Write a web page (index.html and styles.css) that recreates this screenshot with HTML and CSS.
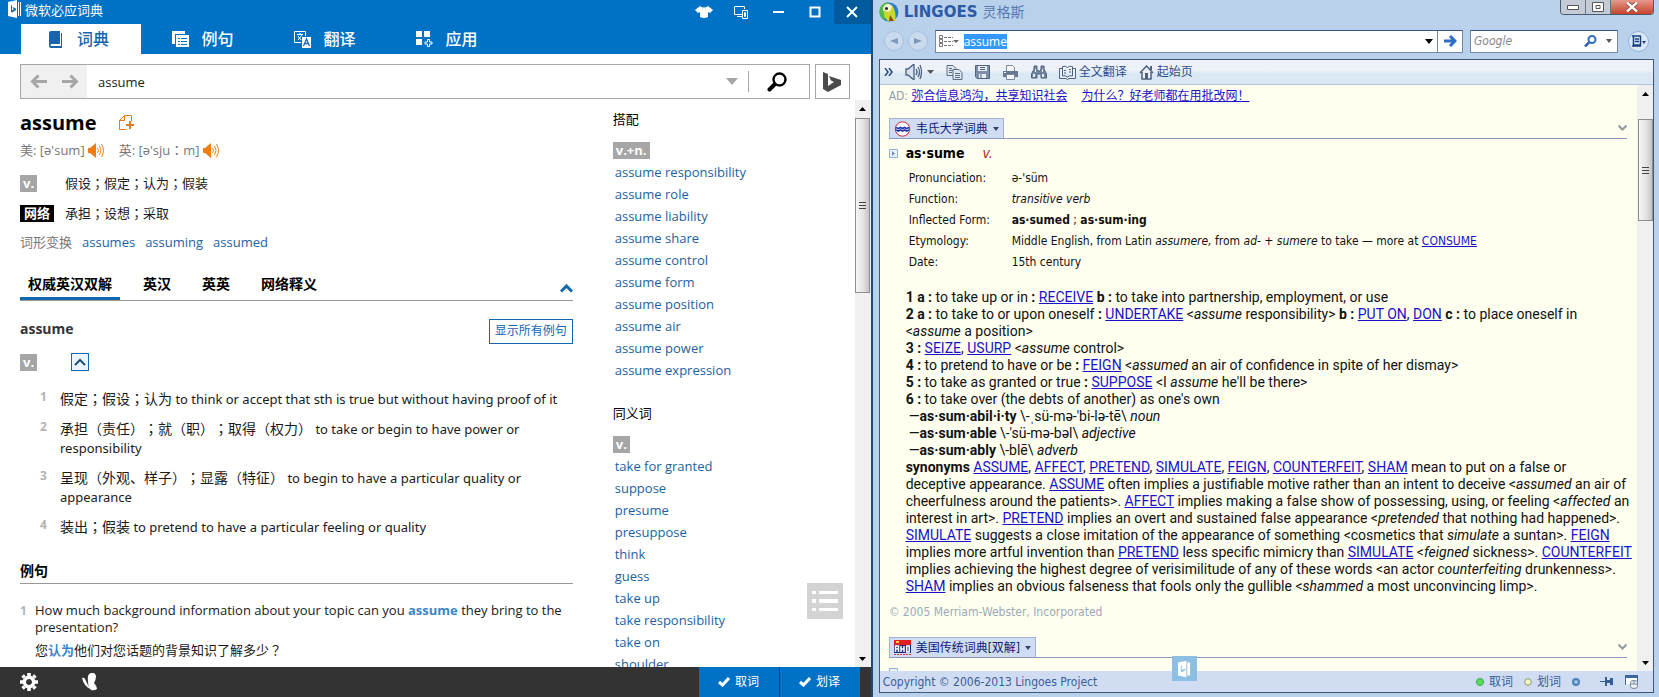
FILE: index.html
```html
<!DOCTYPE html>
<html lang="zh-CN">
<head>
<meta charset="utf-8">
<title>微软必应词典 / Lingoes</title>
<link rel="stylesheet" href="styles.css">
</head>
<body>
<section class="bing">
  <header class="bing-head">
    <div class="bing-title">
      <svg width="14" height="18" viewBox="0 0 14 18"><path fill="#fff" d="M0 2l9-2v18l-9-2zM10 2h1v14h-1zM12 2h1v14h-1z"/><path fill="#0072c6" d="M3 5l1 .4v4.800l2-1-1-.6-.6-1.500L8 8.600v1.600l-4 2.300-1-.6z"/></svg>
      <h1>微软必应词典</h1>
      <div class="bing-ctl">
        <button aria-label="皮肤"><svg width="18" height="12" viewBox="0 0 18 12"><path fill="#fff" d="M5 0Q9 3 13 0l5 4-3 3-2-1v5q-4 2-8 0V6L3 7 0 4z"/></svg></button>
        <button aria-label="迷你"><svg width="15" height="13" viewBox="0 0 15 13" fill="none" stroke="#fff"><path d="M8 8.500H.5v-8h10V3"/><path d="M3 10.500h5"/><path d="M8.500 4.500h5v8h-5z"/><path d="M10.500 6.500h1v4h-1z"/></svg></button>
        <button aria-label="最小化"><svg width="12" height="12"><path fill="#fff" d="M1 5h11v2H1z"/></svg></button>
        <button aria-label="最大化"><svg width="12" height="12"><path fill="none" stroke="#fff" stroke-width="2" d="M1.500 1.500h9v9h-9z"/></svg></button>
        <button class="x" aria-label="关闭"><svg width="12" height="12"><path stroke="#fff" stroke-width="2" d="M1 1l10 10M11 1L1 11"/></svg></button>
      </div>
    </div>
    <nav class="tabs">
      <button class="tab on"><svg width="14" height="17" viewBox="0 0 14 17"><path fill="#1565b0" d="M2 0h9v13H2.500q-1 0-1 1t1 1H12V2h1v15H2Q0 17 0 15V2Q0 0 2 0z"/></svg>词典</button>
      <button class="tab"><svg width="17" height="17" viewBox="0 0 17 17"><path fill="#fff" d="M0 0h13v3H3v10H0z"/><path fill="#fff" d="M4 4h13v12H4z"/><path stroke="#0072c6" d="M6 7.500h2M9 7.500h6M6 10.500h2M9 10.500h6M6 13.500h2M9 13.500h6"/></svg>例句</button>
      <button class="tab"><svg width="17" height="17" viewBox="0 0 17 17"><path fill="none" stroke="#fff" d="M7 11.500H.5V.5h11V5M3 3.500h6M6 2v2M4 9l4-5M4 5l3 4"/><path fill="#fff" d="M8 6h9v11H8z"/><path fill="none" stroke="#0072c6" stroke-width="1.300" d="M9.500 15l3-7 3 7M10.500 12.500h4"/></svg>翻译</button>
      <button class="tab"><svg width="17" height="17" viewBox="0 0 17 17"><path fill="#fff" d="M0 0h6v6H0zM8 0h6v6H8zM0 8h6v6H0z"/><path fill="none" stroke="#fff" d="M11.500 8.500h2v2.500h2.500v2h-2.500v2.500h-2V13H9v-2h2.500z"/></svg>应用</button>
    </nav>
  </header>

  <form class="search" onsubmit="return false">
    <div class="search-box">
      <div class="nav">
        <button type="button" aria-label="后退"><svg width="17" height="15"><path fill="none" stroke="#a6a6a6" stroke-width="3" d="M8.500 1.500l-6 6 6 6M2 7.500h15"/></svg></button>
        <button type="button" aria-label="前进"><svg width="17" height="15"><path fill="none" stroke="#a6a6a6" stroke-width="3" d="M8.500 1.500l6 6-6 6M15 7.500H0"/></svg></button>
      </div>
      <input class="q" aria-label="查词" value="assume">
      <button type="button" class="drop" aria-label="历史"><svg width="12" height="7"><path fill="#a6a6a6" d="M0 0h12L6 7z"/></svg></button>
      <button class="go" aria-label="搜索"><svg width="20" height="20" viewBox="0 0 20 20" fill="none" stroke="#000"><circle cx="12.500" cy="7.500" r="6" stroke-width="2.400"/><path stroke-width="4" stroke-linecap="round" d="M7.500 12.500L2.500 17.500"/></svg></button>
    </div>
    <button type="button" class="b" aria-label="Bing"><svg width="18" height="20" viewBox="0 0 18 20"><path fill="#4b4b4b" d="M0 0l5 2v12l6-4-3-1.500-2-4.500 12 4v5L5 20l-5-3z"/></svg></button>
  </form>

  <div class="bing-body">
    <div class="bing-scroll">
      <main class="entry">
        <div class="word"><h2>assume</h2>
          <svg width="15" height="16" viewBox="0 0 15 16"><path fill="none" stroke="#e07b1c" d="M7 14.500H.5v-9l5-5h7V6M5.500.5v5h-5"/><path stroke="#e07b1c" stroke-width="2" d="M11 6v8M7 10h8"/></svg></div>
        <div class="pron">美: [ə'sum] <svg width="17" height="15" viewBox="0 0 17 15"><path fill="#f07d14" d="M0 5h2l6-5v15l-6-5H0z"/><path fill="none" stroke="#f07d14" d="M9.500 5q2 2.500 0 5M11.500 3q3 4.500 0 9M13.500 1q4 6.500 0 13"/></svg><span>英: [ə'sju<span class="mid" lang="zh-TW">：</span>m]</span> <svg width="17" height="15" viewBox="0 0 17 15"><path fill="#f07d14" d="M0 5h2l6-5v15l-6-5H0z"/><path fill="none" stroke="#f07d14" d="M9.500 5q2 2.500 0 5M11.500 3q3 4.500 0 9M13.500 1q4 6.500 0 13"/></svg></div>
        <div class="sense"><span class="cell"><b class="tag">v.</b></span>假设<span class="mid" lang="zh-TW">；</span>假定<span class="mid" lang="zh-TW">；</span>认为<span class="mid" lang="zh-TW">；</span>假装</div>
        <div class="sense"><span class="cell"><b class="tag black">网络</b></span>承担<span class="mid" lang="zh-TW">；</span>设想<span class="mid" lang="zh-TW">；</span>采取</div>
        <div class="forms">词形变换 <a href="#">assumes</a><a href="#">assuming</a><a href="#">assumed</a></div>
        <div class="subtabs">
          <button class="on">权威英汉双解</button><button>英汉</button><button>英英</button><button>网络释义</button>
          <svg width="13" height="9"><path fill="none" stroke="#1068ad" stroke-width="3" d="M1 7.500L6.500 2 12 7.500"/></svg>
        </div>
        <div class="sub"><h3>assume</h3><button class="showall">显示所有例句</button></div>
        <div class="pos"><b class="tag">v.</b><button aria-label="收起"><svg width="12" height="8"><path fill="none" stroke="#1d4f80" stroke-width="2" d="M1 7l5-5 5 5"/></svg></button></div>
        <ol class="defs">
          <li><i>1</i><p><span class="cn">假定<span class="mid" lang="zh-TW">；</span>假设<span class="mid" lang="zh-TW">；</span>认为</span> to think or accept that sth is true but without having proof of it</p></li>
          <li><i>2</i><p><span class="cn">承担<span class="mid" lang="zh-TW">（</span>责任<span class="mid" lang="zh-TW">）；</span>就<span class="mid" lang="zh-TW">（</span>职<span class="mid" lang="zh-TW">）；</span>取得<span class="mid" lang="zh-TW">（</span>权力<span class="mid" lang="zh-TW">）</span></span> to take or begin to have power or<br>responsibility</p></li>
          <li><i>3</i><p><span class="cn">呈现<span class="mid" lang="zh-TW">（</span>外观、样子<span class="mid" lang="zh-TW">）；</span>显露<span class="mid" lang="zh-TW">（</span>特征<span class="mid" lang="zh-TW">）</span></span> to begin to have a particular quality or<br>appearance</p></li>
          <li><i>4</i><p><span class="cn">装出<span class="mid" lang="zh-TW">；</span>假装</span> to pretend to have a particular feeling or quality</p></li>
        </ol>
        <h4>例句</h4>
        <div class="ex"><i>1</i><div><p>How much background information about your topic can you <b>assume</b> they bring to the<br>presentation?</p><p class="zh">您<b>认为</b>他们对您话题的背景知识了解多少<span class="mid" lang="zh-TW">？</span></p></div></div>
      </main>
      <aside class="side">
        <h5>搭配</h5>
        <b class="tag">v.+n.</b>
        <ul><li><a href="#">assume responsibility</a></li><li><a href="#">assume role</a></li><li><a href="#">assume liability</a></li><li><a href="#">assume share</a></li><li><a href="#">assume control</a></li><li><a href="#">assume form</a></li><li><a href="#">assume position</a></li><li><a href="#">assume air</a></li><li><a href="#">assume power</a></li><li><a href="#">assume expression</a></li></ul>
        <h5>同义词</h5>
        <b class="tag">v.</b>
        <ul><li><a href="#">take for granted</a></li><li><a href="#">suppose</a></li><li><a href="#">presume</a></li><li><a href="#">presuppose</a></li><li><a href="#">think</a></li><li><a href="#">guess</a></li><li><a href="#">take up</a></li><li><a href="#">take responsibility</a></li><li><a href="#">take on</a></li><li><a href="#">shoulder</a></li></ul>
      </aside>
      <button class="toc" aria-label="目录"><svg width="26" height="22" viewBox="0 0 26 22"><path fill="#fff" d="M0 1h4v3H0zM0 9h4v4H0zM0 18h4v3H0zM7 1h19v3H7zM7 9h19v4H7zM7 18h19v3H7z"/></svg></button>
    </div>
    <div class="bar"><svg width="7" height="4"><path d="M0 4l3.500-4L7 4z"/></svg><div class="thumb big"><s></s><s></s><s></s></div><svg class="end" width="7" height="4"><path d="M0 0l3.500 4L7 0z"/></svg></div>
  </div>

  <footer class="bing-foot">
    <button class="ic" aria-label="设置"><svg width="18" height="18" viewBox="-9 -9 18 18"><circle r="4.700" fill="none" stroke="#fff" stroke-width="3.400"/><path stroke="#fff" stroke-width="3.600" d="M0-9v3M0 9V6M-9 0h3M9 0H6M-6.400-6.400l2 2M6.400 6.400l-2-2M-6.400 6.400l2-2M6.400-6.400l-2 2"/></svg></button>
    <button class="ic" aria-label="必应"><svg width="16" height="18" viewBox="0 0 16 18"><path fill="#fff" d="M6 8Q5 1 9 0q4-1 5 3 0 4-2 7 3 3 3 6-3 2-6 1-3-3-3-9zM0 5q2-1 3 1l5 10Q2 13 0 5z"/></svg></button>
    <span class="grow"></span>
    <button class="act"><svg width="12" height="10"><path fill="none" stroke="#fff" stroke-width="3" d="M1 5l3.500 3L11 1"/></svg>取词</button>
    <button class="act"><svg width="12" height="10"><path fill="none" stroke="#fff" stroke-width="3" d="M1 5l3.500 3L11 1"/></svg>划译</button>
  </footer>
</section>

<section class="ling">
  <header class="ling-title">
    <svg width="20" height="20" viewBox="0 0 20 20"><circle cx="10" cy="10" r="9.500" fill="#2a7fc4"/><path fill="#57b947" d="M1 6q2-5 8-6l3 7-7 11Q-1 13 1 6z"/><circle cx="9" cy="7" r="5" fill="#f4f7d8"/><path fill="#c6d92c" d="M5 8q7 5 8-5 5 8 3 16H9q-5-4-4-11z"/><circle cx="7.500" cy="6.500" r="1.500" fill="#222"/><path fill="#8a4a22" d="M11 13l4 6h-5z"/></svg>
    <strong>LINGOES</strong><span>灵格斯</span>
    <div class="winctl"><button aria-label="最小化"><svg width="12" height="5"><path fill="#fff" stroke="#555" d="M.5.5h11v4H.5z"/></svg></button><button aria-label="最大化"><svg width="12" height="10"><path fill="#fff" stroke="#555" d="M.5.5h11v9H.5zM4 3.500h4v3H4z"/></svg></button><button class="close" aria-label="关闭"><svg width="12" height="10"><path stroke="#7a3a33" stroke-width="4" d="M1 .5l10 9M11 .5l-10 9"/><path stroke="#fff" stroke-width="2.500" d="M1 .5l10 9M11 .5l-10 9"/></svg></button></div>
  </header>
  <form class="ling-search" onsubmit="return false">
    <button type="button" class="round" aria-label="后退"><svg width="8" height="6"><path fill="#7f96b8" d="M8 0v6L0 3z"/></svg></button>
    <button type="button" class="round" aria-label="前进"><svg width="8" height="6"><path fill="#7f96b8" d="M0 0v6l8-3z"/></svg></button>
    <div class="field main">
      <svg width="20" height="12" viewBox="0 0 20 12"><path fill="none" stroke="#777" d="M.5.5h3v3h-3zM.5 4.500h3v3h-3zM.5 8.500h3v3h-3z"/><path stroke="#777" stroke-dasharray="3 1" d="M5 2.500h9M5 6.500h9M5 10.500h9"/><path fill="#666" d="M14 5h6l-3 3z"/></svg>
      <div class="sel"><input aria-label="单词" value="assume" size="6"></div>
      <button type="button" class="pull" aria-label="历史"><svg width="8" height="5"><path d="M0 0h8L4 5z"/></svg></button>
      <button class="arrow" aria-label="查找"><svg width="13" height="12"><path fill="none" stroke="#2b70c4" stroke-width="3" d="M0 6h10M6 1l5 5-5 5"/></svg></button>
    </div>
    <div class="field goog"><input aria-label="Google" placeholder="Google"><svg width="13" height="12"><circle cx="8" cy="4.500" r="3.500" fill="none" stroke="#2f6fc0" stroke-width="2"/><path stroke="#2f5fb0" stroke-width="2.500" d="M5 7.500L1 11.500"/></svg><svg width="6" height="4"><path fill="#555" d="M0 0h6L3 4z"/></svg></div>
    <button type="button" class="menu" aria-label="菜单"><svg width="14" height="12"><path fill="none" stroke="#1d3f7a" stroke-width="1.500" d="M0 1h9M1.500 1v9h7V1M3 4h4M3 6.500h4M0 11h9"/><path fill="#1d3f7a" d="M10 6h4l-2 3z"/></svg></button>
  </form>
  <div class="frame">
    <div class="tools">
      <button aria-label="更多"><svg width="9" height="8"><path fill="none" stroke="#234a7c" stroke-width="1.500" d="M1 0l3 4-3 4M5 0l3 4-3 4"/></svg></button>
      <button aria-label="朗读"><svg width="29" height="16" viewBox="0 0 29 16" fill="none" stroke="#4b6282" stroke-width="1.300"><path fill="#d8e2ee" d="M1 5h2l6-5v16l-6-5H1z"/><path d="M11 5q2 3 0 6M13 3q3 5 0 10M15 1q3 7 0 14"/><path fill="#53565c" stroke="none" d="M22 6h7l-3.500 4z"/></svg></button>
      <button aria-label="复制"><svg width="17" height="15" viewBox="0 0 17 15" fill="#dde6f0" stroke="#5b6d86"><path d="M1 .5h6l3 3v7H1z"/><path d="M7 4.500h6l3 3v7H7zM9 8.500h5M9 10.500h5M9 12.500h5M3 3.500h3M3 5.500h4M3 7.500h3"/></svg></button>
      <button aria-label="保存"><svg width="15" height="14" viewBox="0 0 15 14"><path fill="#7d8fa8" stroke="#50627c" d="M.5.500h14v13H2l-1.500-2z"/><path fill="#e8eef5" d="M3 1h9v5H3zM4 9h7v4H4z"/><path stroke="#50627c" d="M5 2.500h5M5 4.500h5M6 9v4"/></svg></button>
      <button aria-label="打印"><svg width="17" height="15" viewBox="0 0 17 15"><path fill="#f4f7fa" stroke="#7c8ba0" d="M4.500.5h6l2 2v4h-8z"/><path fill="#66788f" d="M1 6h15v6H1z"/><path fill="#f4f7fa" stroke="#7c8ba0" d="M4.500 9.500h8v5h-8z"/><path stroke="#fff" d="M2 7.500h2"/></svg></button>
      <button aria-label="查找"><svg width="16" height="14" viewBox="0 0 16 14"><path fill="#7385a0" stroke="#4f617d" d="M3 1h3v3l1 2h2l1-2V1h3v3l2.500 5v4H10V9H6v4H.5V9L3 4z"/><path fill="#e7edf4" d="M2 9h2v3H2zM11 9h2v3h-2zM4 4h1v3H4zM11 4h1v3h-1z"/></svg></button>
      <button><svg width="17" height="15" viewBox="0 0 17 15" fill="#edf2f8" stroke="#4d6384"><path d="M.5 3.500h3v-2q3-1 5 1 2-2 5-1v2h3v10H10l-1.500 1L7 13.500H.5zM3.500 3v8q3-1 5 1 2-2 5-1V3M5 5.500h2M10 4.500h2M5 8h2M10 7h2"/></svg>全文翻译</button>
      <button><svg width="15" height="15" viewBox="0 0 15 15"><path fill="#eef2f7" stroke="#4d6384" stroke-width="1.500" d="M1 8l6.500-7L14 8M3 7v7h9V7"/><path fill="#4d6384" d="M6 8h3v6H6zM11 1h2v4h-2z"/></svg>起始页</button>
    </div>
    <div class="ling-body">
      <div class="paper">
        <p class="ad">AD: <a href="#">弥合信息鸿沟，共享知识社会</a><a href="#">为什么？好老师都在用批改网！</a></p>
        <div class="dict"><button><svg width="17" height="16" viewBox="0 0 17 16"><circle cx="8.500" cy="8" r="7.200" fill="#fff" stroke="#c6252c"/><path fill="none" stroke="#2238b0" stroke-width="1.700" d="M2 6.500l2.500 1 2-1 2 1 2-1 2 1 2.500-1M2 9l2.500 1 2-1 2 1 2-1 2 1 2.500-1"/></svg>韦氏大学词典<svg width="6" height="4"><path fill="#346" d="M0 0h6L3 4z"/></svg></button><svg width="9" height="6"><path fill="none" stroke="#8f9aa0" stroke-width="2" d="M.5.5l4 4 4-4"/></svg></div>
        <div class="head"><svg width="9" height="9"><path fill="#eef4fc" stroke="#8fb0dc" d="M.5.5h8v8h-8z"/><path fill="#6a8fc8" d="M3 2l3 2.500L3 7z"/></svg><h2>as·sume</h2><em>v.</em></div>
        <table><tr><th>Pronunciation:</th><td>ə-'süm</td></tr><tr><th>Function:</th><td><em>transitive verb</em></td></tr><tr><th>Inflected Form:</th><td><b>as·sumed</b> ; <b>as·sum·ing</b></td></tr><tr><th>Etymology:</th><td>Middle English, from Latin <em>assumere,</em> from <em>ad-</em> + <em>sumere</em> to take — more at <a href="#">CONSUME</a></td></tr><tr><th>Date:</th><td>15th century</td></tr></table>
        <div class="text"><b>1 a :</b> to take up or in <b>:</b> <a href="#">RECEIVE</a> <b>b :</b> to take into partnership, employment, or use<br>
<b>2 a :</b> to take to or upon oneself <b>:</b> <a href="#">UNDERTAKE</a> &lt;<em>assume</em> responsibility&gt; <b>b :</b> <a href="#">PUT ON</a>, <a href="#">DON</a> <b>c :</b> to place oneself in<br>&lt;<em>assume</em> a position&gt;<br>
<b>3 :</b> <a href="#">SEIZE</a>, <a href="#">USURP</a> &lt;<em>assume</em> control&gt;<br>
<b>4 :</b> to pretend to have or be <b>:</b> <a href="#">FEIGN</a> &lt;<em>assumed</em> an air of confidence in spite of her dismay&gt;<br>
<b>5 :</b> to take as granted or true <b>:</b> <a href="#">SUPPOSE</a> &lt;I <em>assume</em> he'll be there&gt;<br>
<b>6 :</b> to take over (the debts of another) as one's own<br>
<span class="run">—<b>as·sum·abil·i·ty</b> \-ˌsü-mə-'bi-lə-tē\ <em>noun</em></span>
<span class="run">—<b>as·sum·able</b> \-'sü-mə-bəl\ <em>adjective</em></span>
<span class="run">—<b>as·sum·ably</b> \-blē\ <em>adverb</em></span>
<b>synonyms</b> <a href="#">ASSUME</a>, <a href="#">AFFECT</a>, <a href="#">PRETEND</a>, <a href="#">SIMULATE</a>, <a href="#">FEIGN</a>, <a href="#">COUNTERFEIT</a>, <a href="#">SHAM</a> mean to put on a false or<br>deceptive appearance. <a href="#">ASSUME</a> often implies a justifiable motive rather than an intent to deceive &lt;<em>assumed</em> an air of<br>cheerfulness around the patients&gt;. <a href="#">AFFECT</a> implies making a false show of possessing, using, or feeling &lt;<em>affected</em> an<br>interest in art&gt;. <a href="#">PRETEND</a> implies an overt and sustained false appearance &lt;<em>pretended</em> that nothing had happened&gt;.<br><a href="#">SIMULATE</a> suggests a close imitation of the appearance of something &lt;cosmetics that <em>simulate</em> a suntan&gt;. <a href="#">FEIGN</a><br>implies more artful invention than <a href="#">PRETEND</a> less specific mimicry than <a href="#">SIMULATE</a> &lt;<em>feigned</em> sickness&gt;. <a href="#">COUNTERFEIT</a><br>implies achieving the highest degree of verisimilitude of any of these words &lt;an actor <em>counterfeiting</em> drunkenness&gt;.<br><a href="#">SHAM</a> implies an obvious falseness that fools only the gullible &lt;<em>shammed</em> a most unconvincing limp&gt;.</div>
        <p class="copy">© 2005 Merriam-Webster, Incorporated</p>
        <div class="dict"><button><svg width="17" height="16" viewBox="0 0 17 16"><path fill="#e32020" d="M0 0h17v6H0z"/><path fill="#1a2a78" d="M0 5h17v8H0z"/><path stroke="#fff" stroke-width="1.500" fill="none" d="M1.500 12V6h3v6M1.500 9h3M7 6v6M10 6v6M7 9h3M12.700 6v6h2.500V6z"/><path stroke="#d33" stroke-dasharray="2 1" d="M0 14.500h17"/><path fill="#ffd83a" d="M2 1h3v2H2z"/></svg>美国传统词典[双解]<svg width="6" height="4"><path fill="#346" d="M0 0h6L3 4z"/></svg></button><svg width="9" height="6"><path fill="none" stroke="#8f9aa0" stroke-width="2" d="M.5.5l4 4 4-4"/></svg></div>
        <div class="head"><svg width="9" height="9"><path fill="#eef4fc" stroke="#8fb0dc" d="M.5.5h8v8h-8z"/></svg></div>
      </div>
      <div class="bar"><svg width="7" height="4"><path d="M0 4l3.500-4L7 4z"/></svg><div class="thumb small"><s></s><s></s><s></s></div><svg class="end" width="7" height="4"><path d="M0 0l3.500 4L7 0z"/></svg></div>
    </div>
    <footer class="status"><span>Copyright © 2006-2013 Lingoes Project</span>
      <div><svg width="8" height="8"><circle cx="4" cy="4" r="3.500" fill="#5ade5a" stroke="#3aa54e"/></svg>取词</div>
      <div><svg width="8" height="8"><circle cx="4" cy="4" r="3.300" fill="#f2f5c0" stroke="#8b9c70"/></svg>划词</div>
      <div><svg width="8" height="8"><circle cx="4" cy="4" r="3" fill="#9cc4e4" stroke="#4b82b4" stroke-width="2"/></svg></div>
      <div class="wide"><svg width="13" height="9"><path fill="#335f97" d="M0 4h5V0h2v3h3V1h3v7h-3V6H7v3H5V5H0z"/></svg></div>
      <div><svg width="15" height="14" viewBox="0 0 15 14"><path fill="#fff" stroke="#3867a2" d="M2 9.500h-.5v-9h12v7"/><path fill="#3867a2" d="M1 0h13v3H1z"/><path fill="#e9f0f8" stroke="#7a8799" d="M6.500 7.500q0-2 3.500-2t3.500 2v4q0 2-3.500 2t-3.500-2zM6.500 9h7M10 5.500V9"/></svg></div>
    </footer>
    <div class="float"><svg width="13" height="18" viewBox="0 0 14 18"><path fill="#fff" d="M0 2l9-2v18l-9-2zM10 2h3v14h-3z"/><path fill="#8cbfe2" d="M3 5l1 .4v4.800l2-1L8 8.600v1.600l-4 2.300-1-.6z"/></svg></div>
  </div>
</section>
</body>
</html>
```

FILE: styles.css
```css
* { box-sizing: border-box; }
body { margin: 0; height: 100vh; display: flex; overflow: hidden; font: 13px/18px "Open Sans", "Noto Sans CJK SC", sans-serif; color: #1a1a1a; background: #fff; text-spacing-trim: space-all; }
h1, h2, h3, h4, h5, p, ul, ol { margin: 0; padding: 0; list-style: none; }
button, input { font: inherit; color: inherit; border: 0; background: none; padding: 0; margin: 0; }
input { outline: 0; min-width: 0; }
a { color: #1d5f9f; text-decoration: none; }
svg { flex: none; display: block; }
button { flex: none; display: flex; align-items: center; justify-content: center; }
.mid { font-family: "Noto Sans CJK TC", sans-serif; }

/* Bing dictionary window */
.bing { width: 52.6%; flex: none; display: flex; flex-direction: column; border-right: 2px solid #1d4b78; }
.bing-head { background: #0072c6; height: 54px; display: flex; flex-direction: column; }
.bing-title { height: 24px; display: flex; align-items: flex-start; padding-left: 8px; gap: 3px; }
.bing-title h1 { font-size: 13px; line-height: 20px; font-weight: 400; color: #fff; flex: 1; }
.bing-ctl { display: flex; }
.bing-ctl button { width: 37px; height: 24px; }
.bing-ctl .x { background: #005a9e; }
.tabs { display: flex; padding-left: 21px; gap: 2px; flex: 1; }
.tab { width: 120px; gap: 12px; color: #fff; font-size: 16px; font-weight: 500; }
.tab.on { background: #fff; color: #1565b0; padding-right: 4px; gap: 14px; }
.search { display: flex; gap: 5px; padding: 10px 21px 1px 20px; }
.search-box { flex: 1; height: 35px; border: 1px solid #a6a6a6; display: flex; }
.nav { width: 66px; background: #f0f0f0; display: flex; align-items: center; justify-content: center; gap: 15px; }
.q { flex: 1; padding-left: 11px; }
.drop { width: 32px; }
.go { width: 61px; border-left: 1px solid #a6a6a6; height: 21px; align-self: center; padding-right: 4px; }
.b { width: 35px; height: 35px; border: 1px solid #a6a6a6; }
.bing-body { flex: 1; min-height: 0; display: flex; }
.bing-scroll { flex: 1; min-width: 0; overflow: hidden; position: relative; display: flex; padding-left: 20px; gap: 40px; }
.entry { flex: 553 1 0; min-width: 0; white-space: nowrap; }
.side { flex: 242 1 0; min-width: 0; padding-top: 10px; white-space: nowrap; }
.word { display: flex; align-items: center; gap: 22px; padding-top: 8px; height: 38px; }
.word h2 { font-size: 20px; line-height: 30px; color: #000; }
.pron { display: flex; align-items: center; gap: 3px; height: 24px; color: #777; }
.pron svg + span { margin-left: 11px; }
.sense { display: flex; align-items: center; height: 30px; }
.sense:nth-of-type(3) { margin-top: 6px; }
.cell { width: 45px; display: flex; }
.tag { display: inline-block; background: #a6a6a6; color: #fff; line-height: 17px; padding: 0 3px; }
.tag.black { background: #000; padding: 0 4px; }
.forms { display: flex; gap: 10px; color: #777; height: 28px; align-items: center; }
.subtabs { display: flex; border-bottom: 1px solid #999; height: 33px; margin-top: 12px; }
.subtabs button { font-size: 14px; font-weight: 700; color: #000; padding: 0 8px; margin-right: 15px; }
.subtabs .on { border-bottom: 3px solid #1268b0; border-top: 3px solid transparent; }
.subtabs svg { margin: 16px 0 0 auto; }
.sub { display: flex; justify-content: space-between; align-items: center; margin-top: 17px; height: 26px; }
.sub h3 { font-size: 14px; color: #333; padding-bottom: 4px; }
.showall { border: 1px solid #1565b0; color: #1565b0; font-size: 12px; height: 25px; padding: 0 5px; }
.pos { display: flex; align-items: center; gap: 34px; height: 36px; }
.pos button { width: 18px; height: 18px; border: 1px solid #1565b0; background: #eaf6ff; }
.defs { padding: 10px 0 0 20px; display: grid; gap: 11px; line-height: 19px; font-family: "Noto Sans", "Noto Sans CJK SC", sans-serif; }
.cn { font-size: 14px; line-height: 17px; }
.defs li { display: flex; }
.defs i, .ex i { font-style: normal; font-weight: 700; font-size: 12px; color: #b4b4b4; flex: none; }
.defs i { width: 20px; line-height: 13px; }
h4 { font-size: 14px; color: #000; border-bottom: 1px solid #999; height: 24px; line-height: 22px; margin-top: 23px; }
.ex { display: flex; padding-top: 18px; line-height: 17px; }
.ex i { width: 15px; }
.ex b { color: #3a86c8; }
.zh { padding-top: 5px; }
h5 { font-size: 13px; font-weight: 400; color: #000; height: 31px; }
.side ul { padding: 2px 0 0 2px; }
.side li { line-height: 22px; }
.side ul + h5 { padding-top: 23px; height: 54px; }
.toc { position: absolute; right: 12px; bottom: 48px; width: 36px; height: 36px; background: #d3d3d3; }
.bar { width: 16px; background: #f0f0f0; display: flex; flex-direction: column; align-items: center; padding: 7px 0 6px; }
.thumb { width: 15px; border: 1px solid #8e8e8e; background: linear-gradient(90deg, #f5f5f5, #e3e3e3 55%, #c4c4c8); display: flex; flex-direction: column; gap: 2px; align-items: center; justify-content: center; margin-top: 7px; }
.thumb s { width: 7px; height: 1px; background: #444; }
.big { height: 175px; }
.small { height: 102px; margin-top: 23px; }
.end { margin-top: auto; }
.bing-foot { height: 30px; background: #333; display: flex; padding: 0 11px 0 20px; gap: 1px; }
.ic { margin-right: 43px; }
.grow { flex: 1; }
.act { width: 80px; background: #0072c6; color: #fff; font-size: 12px; gap: 5px; }

/* Lingoes window */
.ling { flex: 1; min-width: 0; display: flex; flex-direction: column; padding: 0 5px 4px 6px; background: #b9d1ea; font-family: "DejaVu Sans Condensed", "Noto Sans CJK SC", sans-serif; font-size: 12px; }
.ling-title { display: flex; height: 26px; gap: 5px; align-items: flex-start; padding-top: 2px; color: #3c66b0; }
.ling-title strong { font: 700 15px/20px "DejaVu Sans", sans-serif; color: #2c5aa8; }
.ling-title span { font-size: 14px; line-height: 20px; color: #5879b0; }
.winctl { margin: -2px 0 0 auto; display: flex; height: 15px; border: 1px solid #4d5c70; border-top: 0; border-radius: 0 0 4px 4px; overflow: hidden; }
.winctl button { width: 25px; background: #c3cbd6; border-right: 1px solid #6a7585; }
.winctl .close { width: 42px; background: linear-gradient(#e39a8c, #c9412c); border: 0; }
.ling-search { display: flex; align-items: center; height: 30px; padding-left: 5px; margin-bottom: 3px; }
.round { width: 20px; height: 20px; border-radius: 50%; border: 1px solid #a9bfdd; background: #c9daee; margin-right: 4px; }
.field { height: 23px; background: #fff; border: 1px solid #6f88ab; border-top-color: #39547c; display: flex; align-items: center; }
.main { flex: 1; min-width: 0; margin: 0 7px 0 3px; padding-left: 3px; }
.sel { flex: 1; padding-left: 5px; min-width: 0; }
.sel input { background: #3399ff; color: #fff; width: 43px; height: 15px; line-height: 15px; font-family: "Open Sans", sans-serif; font-size: 12px; display: block; }
.pull { width: 16px; }
.arrow { width: 25px; height: 21px; border-left: 1px solid #6f88ab; }
.goog { width: 148px; flex: none; padding: 0 5px 0 3px; gap: 9px; }
.goog input { flex: 1; font-style: italic; font-size: 12px; }
.goog input::placeholder { color: #888; }
.menu { width: 21px; height: 21px; border-radius: 50%; background: #d8e8f8; border: 1px solid #8fafd6; margin: 0 5px 0 10px; }
.frame { flex: 1; min-height: 0; border: 1px solid #3e587c; display: flex; flex-direction: column; position: relative; }
.tools { height: 25px; background: linear-gradient(#eef2f8 40%, #dae7f5 60%); border-bottom: 1px solid #b4c4d8; display: flex; align-items: center; padding-left: 4px; color: #2a4f8c; }
.tools button { gap: 3px; margin-right: 12px; }
.ling-body { flex: 1; min-height: 0; display: flex; background: #fffff0; }
.paper { flex: 1; min-width: 0; overflow: hidden; padding: 2px 10px 0 9px; white-space: nowrap; color: #111; }
.ling a { color: #1a12c8; text-decoration: underline; }
.ad { color: #8ba0ae; }
.ad a + a { margin-left: 14px; }
.dict { display: flex; justify-content: space-between; align-items: center; border-bottom: 1px solid #8899c0; height: 21px; margin-top: 13px; }
.dict button { height: 20px; gap: 5px; padding: 0 4px; background: #d0dcf2; border: 1px solid #a0b2d6; border-bottom: 0; color: #101c78; }
.head { display: flex; align-items: center; gap: 8px; height: 28px; }
.head h2 { font-size: 14px; color: #000; }
.head em { color: #b02828; font-size: 14px; margin-left: 10px; }
table { border-collapse: collapse; margin-left: 20px; }
th, td { font-weight: 400; text-align: left; height: 21px; padding: 0; }
th { width: 103px; }
.text { font-family: Roboto, sans-serif; font-size: 14px; line-height: 17px; padding: 17px 0 0 17px; }
.run { display: block; padding-left: 3px; }
.copy { color: #9aabb8; padding-top: 8px; }
.copy + .dict { margin-top: 16px; }
.status { height: 21px; background: #d0dcf2; display: flex; align-items: center; padding: 0 14px 0 3px; color: #3a5f98; }
.status span { flex: 1; }
.status div { display: flex; align-items: center; gap: 5px; margin-left: 11px; }
.status .wide { margin-left: 20px; }
.float { position: absolute; left: 37.800%; bottom: 11px; width: 25px; height: 25px; background: #8cbfe2; display: flex; align-items: center; justify-content: center; }
```
